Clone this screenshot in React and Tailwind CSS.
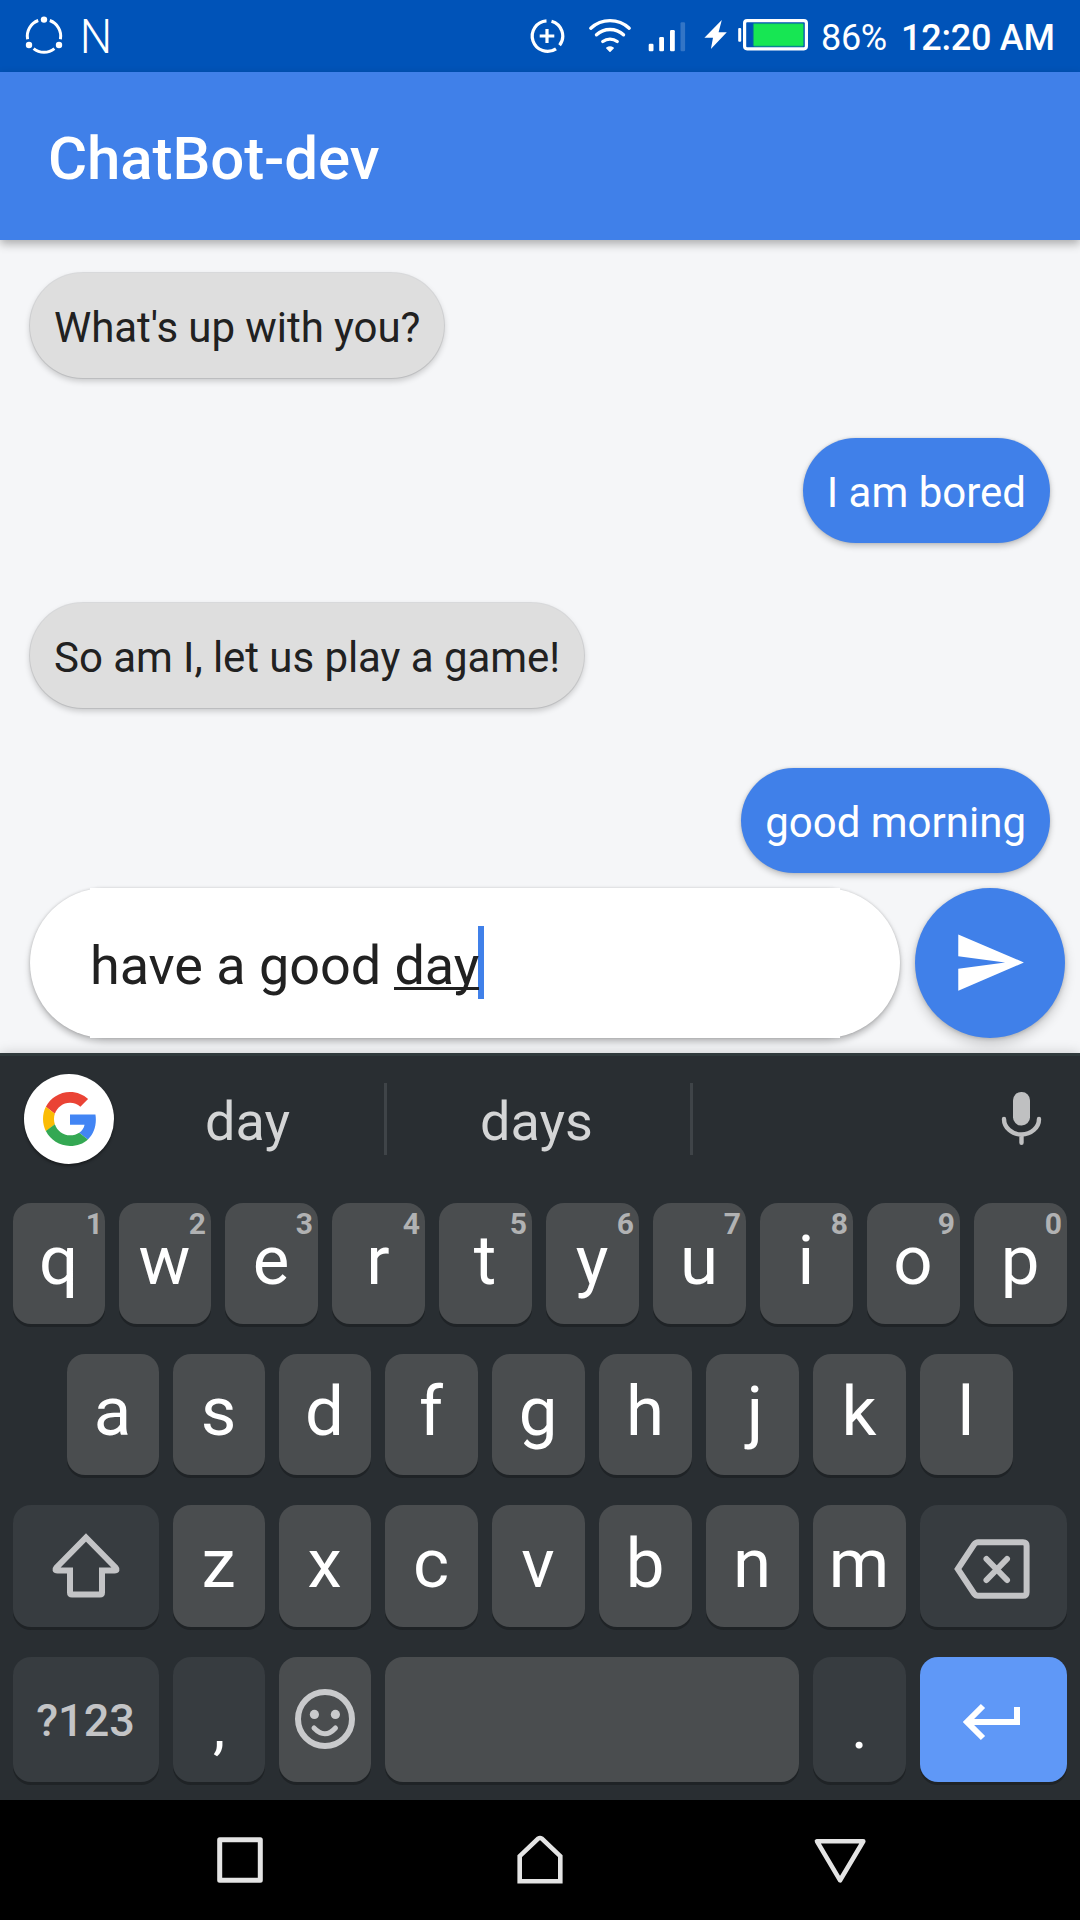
import React from "react";

const ROW_1 = [
  ["q", "1"], ["w", "2"], ["e", "3"], ["r", "4"], ["t", "5"],
  ["y", "6"], ["u", "7"], ["i", "8"], ["o", "9"], ["p", "0"],
];

function StatusBar() {
  return (
    <div className="flex h-[72px] shrink-0 items-center bg-[#0053b8] text-white">
      <svg className="ml-6 size-10 shrink-0" viewBox="24 16 40 40" fill="none" stroke="#fff" strokeWidth="3">
        <path d="M38.2 20.5A16.5 16.5 0 0 0 27.6 39.2M49.8 20.5A16.5 16.5 0 0 1 60.4 39.2M33.6 48.6A16.5 16.5 0 0 0 54.4 48.6" />
        <g fill="#fff" stroke="none">
          <circle cx="44" cy="19.6" r="3.2" />
          <circle cx="29" cy="45" r="3.2" />
          <circle cx="59" cy="45" r="3.2" />
        </g>
      </svg>
      <span className="ml-[12px] w-10 shrink-0 scale-x-95 pt-[2px] text-center text-[48px] leading-none font-light">N</span>
      <div className="flex-1" />
      <svg className="h-10 w-[37px] shrink-0" viewBox="528 16 37 40" fill="none" stroke="#fff" strokeWidth="3.2">
        <path d="M546.5 20.8A15.3 15.3 0 1 0 556 48.8" />
        <path d="M551.5 21.2A15.3 15.3 0 0 1 559.6 45.2" />
        <path d="M547 29v14M539.7 36h14.6" />
      </svg>
      <svg className="ml-[22px] h-10 w-[46px] shrink-0" viewBox="587 16 46 40" fill="none" stroke="#fff" strokeWidth="3.4" strokeLinecap="round">
        <path d="M590.8 28.2a28 28 0 0 1 38.4 0M596.5 34.8a20 20 0 0 1 27 0M602.8 41.5a12 12 0 0 1 14.4 0" />
        <path d="M606.8 48Q610 45.8 613.2 48L610 51.2Z" fill="#fff" strokeWidth="1.5" strokeLinejoin="round" />
      </svg>
      <svg className="ml-[13px] h-10 w-[42px] shrink-0" viewBox="646 16 42 40" fill="#fff">
        <rect x="648.7" y="43.8" width="4.8" height="7.4" rx="1.2" />
        <rect x="659.2" y="37" width="4.8" height="14.2" rx="1.2" />
        <rect x="670" y="30" width="4.8" height="21.2" rx="1.2" />
        <rect x="680.5" y="22.3" width="4.6" height="28.9" rx="1.2" opacity=".2" />
      </svg>
      <svg className="ml-[14px] h-10 w-[26px] shrink-0" viewBox="702 16 26 40" fill="#fff">
        <path d="M721.8 20L704.4 37.8H713L710.9 49L726.8 32.2H718.6Z" />
      </svg>
      <svg className="ml-2 h-10 w-[74px] shrink-0" viewBox="736 16 74 40" fill="none">
        <rect x="738.2" y="28" width="3" height="13.8" rx="1" fill="#fff" />
        <rect x="744.6" y="20.6" width="61.8" height="28.2" rx="2.5" stroke="#fff" strokeWidth="3.2" />
        <rect x="753.3" y="23.6" width="50.2" height="22.6" rx="1" fill="#17e653" stroke="#0c9482" strokeWidth=".8" />
      </svg>
      <span className="ml-[11px] w-[80px] shrink-0 pt-[3px] text-[36px] leading-none tracking-[-0.3px]">86%</span>
      <span className="w-[179px] shrink-0 pt-[3px] text-[36px] leading-none font-medium tracking-[-0.25px]">12:20 AM</span>
    </div>
  );
}

function Bubble({ mine, children }) {
  return (
    <div
      className={
        mine
          ? "h-[105px] self-end rounded-full bg-[#4080e9] px-6 pt-1 text-[42px] leading-[101px] text-white shadow-[0_3px_6px_rgba(0,0,0,0.22),0_0_3px_rgba(0,0,0,0.12)]"
          : "h-[105px] self-start rounded-full bg-[#dedede] px-6 pt-1 text-[42px] leading-[101px] tracking-[-0.06px] text-[#212121] shadow-[0_0_0_1px_rgba(0,0,0,0.09),0_3px_6px_rgba(0,0,0,0.2)]"
      }
    >
      {children}
    </div>
  );
}

function Composer() {
  return (
    <div className="flex h-[165px] shrink-0 items-start gap-[15px] pl-[30px]">
      <div className="flex h-[150px] w-[870px] rounded-full bg-white px-[60px] shadow-[0_4px_6px_rgba(0,0,0,0.25),0_0_3px_rgba(0,0,0,0.16)]">
        <div className="flex h-[150px] w-[750px] items-center bg-white pt-[5px] text-[54px] leading-none tracking-[-0.06px] whitespace-pre text-[#212121]">
          <span>have a good </span>
          <span className="relative">
            day
            <span className="absolute top-[48px] left-0 h-[3px] w-[85px] bg-[#212121]" />
          </span>
          <span className="-mt-[7px] -ml-px h-[73px] w-[6px] bg-[#4080e9]" />
        </div>
      </div>
      <div className="flex size-[150px] items-center justify-center rounded-full bg-[#4080e9] pr-[2px] pb-px shadow-[0_6px_12px_rgba(0,0,0,0.18),0_1px_4px_rgba(0,0,0,0.18)]">
        <svg className="size-[75px]" viewBox="0 0 24 24" fill="#fff">
          <path d="M2.01 21L23 12 2.01 3 2 10l15 2-15 2z" />
        </svg>
      </div>
    </div>
  );
}

function Suggestions() {
  return (
    <div className="flex h-[126px] items-center text-[54px] leading-none text-[#d4d5d6]">
      <div className="ml-6 flex size-[90px] items-center justify-center rounded-full bg-white pl-[2px] shadow-[0_2px_3px_rgba(0,0,0,0.4)]">
        <svg className="size-[54px]" viewBox="0 0 48 48">
          <path fill="#ea4335" d="M24 9.5c3.54 0 6.71 1.22 9.21 3.6l6.85-6.85C35.9 2.38 30.47 0 24 0 14.62 0 6.51 5.38 2.56 13.22l7.98 6.19C12.43 13.72 17.74 9.5 24 9.5z" />
          <path fill="#4285f4" d="M46.98 24.55c0-1.57-.15-3.09-.38-4.55H24v9.02h12.94c-.58 2.96-2.26 5.48-4.78 7.18l7.73 6c4.51-4.18 7.09-10.36 7.09-17.65z" />
          <path fill="#fbbc05" d="M10.53 28.59c-.48-1.45-.76-2.99-.76-4.59s.27-3.14.76-4.59l-7.98-6.19C.92 16.46 0 20.12 0 24c0 3.88.92 7.54 2.56 10.78l7.97-6.19z" />
          <path fill="#34a853" d="M24 48c6.48 0 11.93-2.13 15.89-5.81l-7.73-6c-2.15 1.45-4.92 2.3-8.16 2.3-6.26 0-11.57-4.22-13.47-9.91l-7.98 6.19C6.51 42.62 14.62 48 24 48z" />
        </svg>
      </div>
      <div className="w-[270px] pt-[5px] pr-[3px] text-center">day</div>
      <div className="h-[72px] w-[3px] bg-[#3f4448]" />
      <div className="w-[303px] pt-[5px] pr-1 text-center">days</div>
      <div className="h-[72px] w-[3px] bg-[#3f4448]" />
      <svg className="ml-[305px] h-[60px] w-[46px]" viewBox="998 1089 46 60" fill="none" stroke="#bfc0c1">
        <rect x="1013" y="1092" width="17" height="33.5" rx="8.2" fill="#bfc0c1" stroke="none" />
        <path d="M1004 1119a17.5 15.5 0 0 0 35 0M1021.5 1135v7.8" strokeWidth="4.4" strokeLinecap="round" />
      </svg>
    </div>
  );
}

function Key({ label, hint, className = "w-[93px]" }) {
  return (
    <div className={`relative flex h-full shrink-0 items-center justify-center rounded-[18px] bg-[#4a4d4f] pb-[6px] text-[69px] leading-none text-white shadow-[0_3px_0_#1f2326] ${className}`}>
      <span className={label === "j" ? "pl-[5px]" : "pr-px"}>{label}</span>
      {hint && (
        <span className={`absolute top-[6px] text-[30px] leading-none font-bold text-[#b1b2b3] ${hint === "1" ? "right-[2px]" : "right-[5px]"}`}>{hint}</span>
      )}
    </div>
  );
}

function FunctionKey({ children, className }) {
  return (
    <div className={`flex h-full shrink-0 items-center justify-center rounded-[18px] leading-none shadow-[0_3px_0_#1f2326] ${className}`}>
      {children}
    </div>
  );
}

function Keyboard() {
  return (
    <div className="flex h-[747px] shrink-0 flex-col border-t-[3px] border-[#303a3c] bg-[#292e32] shadow-[0_0_12px_rgba(0,0,0,0.18)]">
      <Suggestions />
      <div className="mt-[21px] flex h-[121px] gap-[14px] pl-[13px]">
        {ROW_1.map(([k, n], i) => (
          <Key key={k} label={k} hint={n} className={i < 2 ? "w-[92px]" : "w-[93px]"} />
        ))}
      </div>
      <div className="mt-[30px] flex h-[121px] gap-[14px] pl-[67px]">
        {[..."asdfghjkl"].map((k, i) => (
          <Key key={k} label={k} className={i < 3 ? "w-[92px]" : "w-[93px]"} />
        ))}
      </div>
      <div className="mt-[30px] flex h-[122px] gap-[14px] pl-[13px]">
        <FunctionKey className="w-[146px] bg-[#373c40]">
          <svg className="h-[122px] w-[146px]" viewBox="13 1505 146 122" fill="none" stroke="#c3c4c6" strokeWidth="6">
            <path d="M86 1537.5L115.5 1567.5Q118 1570.4 114.5 1570.4H102V1592.5Q102 1594.6 100 1594.6H72Q70 1594.6 70 1592.5V1570.4H57.5Q54 1570.4 56.5 1567.5Z" />
          </svg>
        </FunctionKey>
        {[..."zxcvbnm"].map((k, i) => (
          <Key key={k} label={k} className={i < 2 ? "w-[92px]" : "w-[93px]"} />
        ))}
        <FunctionKey className="w-[147px] bg-[#373c40]">
          <svg className="h-[122px] w-[147px]" viewBox="920 1505 147 122" fill="none" stroke="#c3c4c6" strokeWidth="6">
            <path d="M957.8 1569L974 1544.5Q975.7 1542.2 978 1542.2H1023Q1026.6 1542.2 1026.6 1545.8V1592.2Q1026.6 1595.8 1023 1595.8H978Q975.7 1595.8 974 1593.5Z" />
            <path d="M986.5 1559L1007 1580M1007 1559L986.5 1580" strokeLinecap="round" />
          </svg>
        </FunctionKey>
      </div>
      <div className="mt-[30px] flex h-[125px] gap-[14px] pl-[13px]">
        <FunctionKey className="w-[146px] bg-[#373c40] pt-px pr-px text-[45px] font-medium text-[#c3c4c6]">?123</FunctionKey>
        <FunctionKey className="w-[92px] bg-[#373c40] pt-[15px] text-[62px] text-white">,</FunctionKey>
        <FunctionKey className="w-[92px] bg-[#4a4d4f]">
          <svg className="h-[125px] w-[92px]" viewBox="279 1657 92 125" fill="none" stroke="#c9cacc" strokeWidth="6">
            <circle cx="325" cy="1719" r="27" />
            <g fill="#c9cacc" stroke="none">
              <circle cx="314.4" cy="1714.4" r="4.6" />
              <circle cx="335.4" cy="1714.4" r="4.6" />
            </g>
            <path d="M314 1728Q325 1739.5 335.5 1728" strokeWidth="5" strokeLinecap="round" />
          </svg>
        </FunctionKey>
        <FunctionKey className="w-[414px] bg-[#4a4d4f]" />
        <FunctionKey className="w-[93px] bg-[#373c40] pt-[15px] text-[62px] text-white">.</FunctionKey>
        <FunctionKey className="w-[147px] bg-[#5f98f7]">
          <svg className="h-[125px] w-[147px]" viewBox="920 1657 147 125" fill="none" stroke="#fff" strokeWidth="6">
            <path d="M1017 1707V1722H968M983 1706L967 1722L983 1738" />
          </svg>
        </FunctionKey>
      </div>
    </div>
  );
}

function NavBar() {
  return (
    <div className="flex h-[120px] shrink-0 items-center justify-center gap-[240px] bg-black">
      <svg className="size-[60px]" viewBox="210 1830 60 60" fill="none" stroke="#e4e4e4" strokeWidth="5">
        <rect x="219.7" y="1839.7" width="40.6" height="40.6" strokeLinejoin="round" />
      </svg>
      <svg className="size-[60px]" viewBox="510 1830 60 60" fill="none" stroke="#e4e4e4" strokeWidth="4.6">
        <path d="M519.7 1881.2V1856.2L538.2 1838.6Q540 1837.4 541.8 1838.6L560.3 1856.2V1881.2Z" />
      </svg>
      <svg className="size-[60px]" viewBox="810 1830 60 60" fill="none" stroke="#e4e4e4" strokeWidth="4.6" strokeLinejoin="round">
        <path d="M817 1841.3H863.3L840.1 1880.3Z" />
      </svg>
    </div>
  );
}

export default function App() {
  return (
    <div className="flex h-[1920px] w-[1080px] flex-col overflow-hidden bg-[#f5f6f8] font-['Roboto',sans-serif]">
      <StatusBar />
      <header className="flex h-[168px] shrink-0 items-center bg-[#4080e9] pt-[5px] pl-12 text-[60px] leading-none font-medium tracking-[-0.1px] text-white shadow-[0_4px_9px_rgba(0,0,0,0.3)]">
        ChatBot-dev
      </header>
      <main className="flex h-[648px] shrink-0 flex-col gap-[60px] px-[30px] pt-[33px]">
        <Bubble>What's up with you?</Bubble>
        <Bubble mine>I am bored</Bubble>
        <Bubble>So am I, let us play a game!</Bubble>
        <Bubble mine>good morning</Bubble>
      </main>
      <Composer />
      <Keyboard />
      <NavBar />
    </div>
  );
}
